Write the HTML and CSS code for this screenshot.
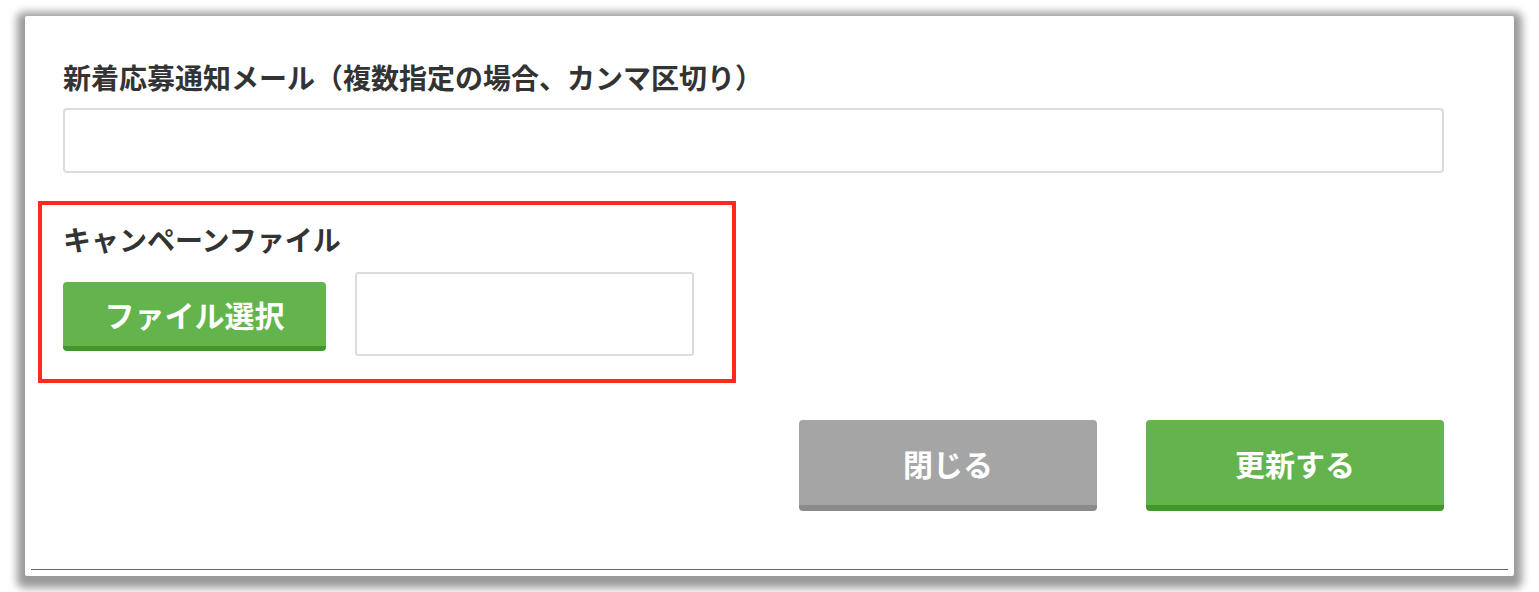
FILE: index.html
```html
<!DOCTYPE html>
<html lang="ja">
<head>
<meta charset="utf-8">
<title>設定</title>
<link rel="stylesheet" href="styles.css">
</head>
<body>
<div class="panel">
  <div class="content">
    <div class="field">
      <label class="label">新着応募通知メール（複数指定の場合、カンマ区切り）</label>
      <div class="text-input"></div>
    </div>
    <div class="highlight">
      <label class="label">キャンペーンファイル</label>
      <div class="file-row">
        <button class="btn btn-green btn-file">ファイル選択</button>
        <div class="file-name"></div>
      </div>
    </div>
    <div class="actions">
      <button class="btn btn-grey btn-action">閉じる</button>
      <button class="btn btn-green btn-action">更新する</button>
    </div>
  </div>
  <div class="rule"></div>
</div>
</body>
</html>
```
FILE: styles.css
```css
* { box-sizing: border-box; }
html, body { margin: 0; padding: 0; background: #fff; }
body {
  font-family: "Noto Sans CJK JP", "Noto Sans", sans-serif;
  color: #333;
  width: 1539px;
  height: 592px;
  overflow: hidden;
}
.panel {
  margin: 16px 0 0 25px;
  width: 1489px;
  height: 560px;
  background: #fff;
  border-radius: 2px;
  box-shadow: 0 4px 8px 8px rgba(0, 0, 0, 0.4);
  display: flex;
  flex-direction: column;
}
.content {
  flex: 1;
  padding: 43px 70px 0 13px;
  display: flex;
  flex-direction: column;
}
.label {
  display: block;
  font-size: 28px;
  font-weight: 700;
  line-height: 36px;
  color: #333;
}
.field { padding-left: 25px; }
.field .label { margin-bottom: 13px; }
.text-input {
  height: 65px;
  border: 2px solid #dcdcdc;
  border-radius: 4px;
  background: #fff;
}
.highlight {
  margin-top: 28px;
  width: 698px;
  border: 4px solid #ff2a1d;
  padding: 16px 21px 23px 21px;
}
.highlight .label { margin-bottom: 15px; }
.file-row {
  display: flex;
  align-items: center;
  gap: 29px;
}
.btn {
  font-family: inherit;
  font-weight: 700;
  color: #fff;
  border: none;
  border-radius: 4px;
  font-size: 30px;
  cursor: pointer;
  padding: 0;
}
.btn-green { background: #63b44c; border-bottom: 5px solid #43962d; }
.btn-grey { background: #a5a5a5; border-bottom: 6px solid #8a8a8a; }
.btn-file {
  width: 263px;
  height: 69px;
  margin-top: 5px;
}
.file-name {
  width: 339px;
  height: 84px;
  border: 2px solid #dcdcdc;
  border-radius: 3px;
}
.actions {
  margin-top: 37px;
  display: flex;
  justify-content: flex-end;
  gap: 49px;
}
.btn-action {
  width: 298px;
  height: 91px;
}
.btn-green.btn-action { border-bottom-width: 6px; }
.rule {
  margin: 0 6px 6px 6px;
  height: 1px;
  background: #666;
}
```
